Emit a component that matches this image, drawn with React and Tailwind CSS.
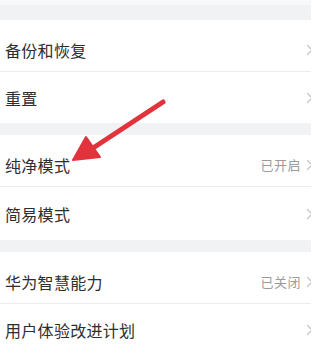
import React from "react";

const Chevron = () => (
  <svg width="8" height="12" viewBox="0 0 8 12" className="shrink-0">
    <path d="M1.5 1.5 L6 6 L1.5 10.5" fill="none" stroke="#c8c8c8" strokeWidth="1.4" strokeLinecap="round" strokeLinejoin="round" />
  </svg>
);

const Row = ({ title, value, divider, h, first }) => (
  <div className={`flex items-center pl-[5px] ${first ? "pt-[8px]" : ""} ${h} ${divider ? "border-b border-[#ececec]" : ""}`}>
    <span className="flex-1 text-[16px] text-[#2e2e2e] tracking-[0.3px]">{title}</span>
    {value && <span className="text-[13px] text-[#9a9a9a] mr-[5px] tracking-[0.5px]">{value}</span>}
    <div className="w-[8px] mr-[-3px] flex items-center"><Chevron /></div>
  </div>
);

export default function App() {
  return (
    <div
      className="relative w-[311px] h-[353px] overflow-hidden bg-[#f1f2f4]"
      style={{ fontFamily: '"Noto Sans CJK SC", "Noto Sans", sans-serif' }}
    >
      <div className="h-[5px] bg-[#f8f9fa]" />
      <div className="h-[15px]" />
      <div className="bg-white">
        <Row title="备份和恢复" divider first h="h-[52px]" />
        <Row title="重置" h="h-[51px]" />
      </div>
      <div className="h-[12px]" />
      <div className="bg-white">
        <Row title="纯净模式" value="已开启" divider first h="h-[52px]" />
        <Row title="简易模式" h="h-[53px]" />
      </div>
      <div className="h-[12px]" />
      <div className="bg-white">
        <Row title="华为智慧能力" value="已关闭" divider first h="h-[52px]" />
        <Row title="用户体验改进计划" h="h-[52px]" />
      </div>
      <svg className="absolute left-0 top-0 pointer-events-none" width="311" height="353" viewBox="0 0 311 353">
        <line x1="163" y1="102" x2="90" y2="150" stroke="#e2323c" strokeWidth="5" strokeLinecap="round" />
        <polygon points="73,160 86,137 100,157" fill="#e2323c" stroke="#e2323c" strokeWidth="2" strokeLinejoin="round" />
      </svg>
    </div>
  );
}
